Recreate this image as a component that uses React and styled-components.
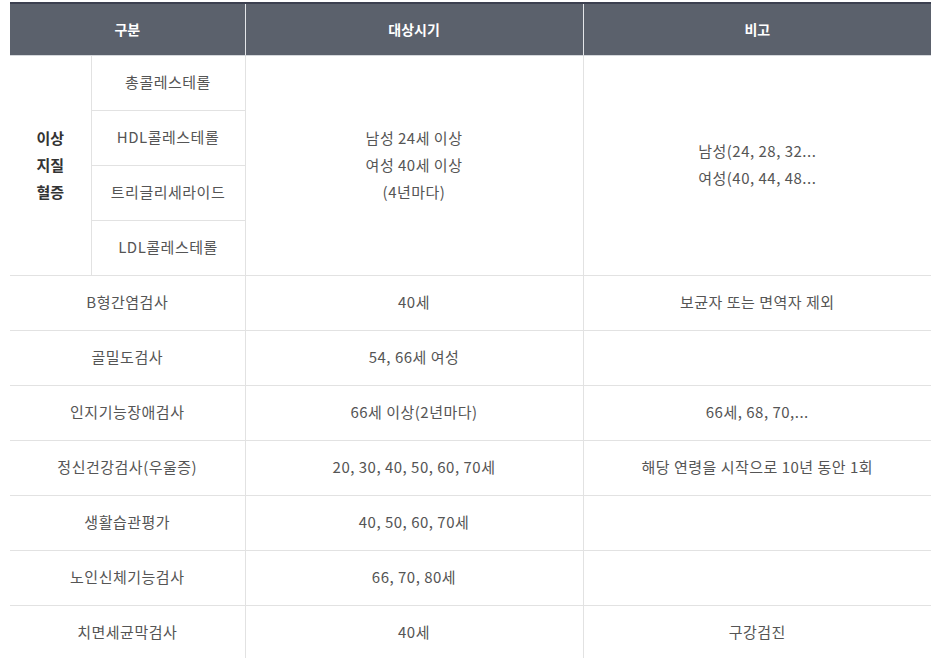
import styled, { createGlobalStyle } from "styled-components";

const GlobalStyle = createGlobalStyle`
    html, body {
        margin: 0;
        padding: 0;
        background: #fff;
    }
    body {
        font-family: "Noto Sans CJK KR", "Noto Sans", sans-serif;
    }
`;

const Wrapper = styled.div`
    padding: 2px 11px 0 10px;
`;

const Table = styled.table`
    width: 921px;
    border-collapse: collapse;
    table-layout: fixed;
    border-top: 2px solid #3c4050;
    font-size: 15px;
    letter-spacing: 0.5px;
    color: #555;
`;

const Th = styled.th`
    height: 49px;
    padding: 0 0 2px;
    background-color: #5b616c;
    color: #fff;
    font-size: 14px;
    font-weight: 700;
    letter-spacing: 0;
    text-align: center;
    border-bottom: 1px solid #d5d8dc;
    border-left: ${(props) => (props.$first ? "none" : "1px solid #e4e6e9")};
`;

const Td = styled.td`
    height: 51px;
    padding: 0 0 3px;
    text-align: center;
    vertical-align: middle;
    line-height: 27px;
    border-bottom: 1px solid #e2e2e2;
    border-left: ${(props) => (props.$first ? "none" : "1px solid #e2e2e2")};
`;

const GroupCell = styled(Td)`
    font-weight: 700;
    color: #333;
    letter-spacing: 0;
`;

const rows = [
    ["B형간염검사", "40세", "보균자 또는 면역자 제외"],
    ["골밀도검사", "54, 66세 여성", ""],
    ["인지기능장애검사", "66세 이상(2년마다)", "66세, 68, 70,..."],
    ["정신건강검사(우울증)", "20, 30, 40, 50, 60, 70세", "해당 연령을 시작으로 10년 동안 1회"],
    ["생활습관평가", "40, 50, 60, 70세", ""],
    ["노인신체기능검사", "66, 70, 80세", ""],
    ["치면세균막검사", "40세", "구강검진"],
];

const lipids = ["총콜레스테롤", "HDL콜레스테롤", "트리글리세라이드", "LDL콜레스테롤"];

export default function App() {
    return (
        <Wrapper>
            <GlobalStyle />
            <Table>
                <colgroup>
                    <col style={{ width: 81 }} />
                    <col style={{ width: 154 }} />
                    <col style={{ width: 338 }} />
                    <col style={{ width: 348 }} />
                </colgroup>
                <thead>
                    <tr>
                        <Th colSpan={2} $first>구분</Th>
                        <Th>대상시기</Th>
                        <Th>비고</Th>
                    </tr>
                </thead>
                <tbody>
                    {lipids.map((name, i) => (
                        <tr key={name}>
                            {i === 0 && (
                                <GroupCell rowSpan={4} $first>
                                    이상
                                    <br />
                                    지질
                                    <br />
                                    혈증
                                </GroupCell>
                            )}
                            <Td>{name}</Td>
                            {i === 0 && (
                                <>
                                    <Td rowSpan={4}>
                                        남성 24세 이상
                                        <br />
                                        여성 40세 이상
                                        <br />
                                        (4년마다)
                                    </Td>
                                    <Td rowSpan={4}>
                                        남성(24, 28, 32...
                                        <br />
                                        여성(40, 44, 48...
                                    </Td>
                                </>
                            )}
                        </tr>
                    ))}
                    {rows.map(([name, when, note]) => (
                        <tr key={name}>
                            <Td colSpan={2} $first>{name}</Td>
                            <Td>{when}</Td>
                            <Td>{note}</Td>
                        </tr>
                    ))}
                </tbody>
            </Table>
        </Wrapper>
    );
}
